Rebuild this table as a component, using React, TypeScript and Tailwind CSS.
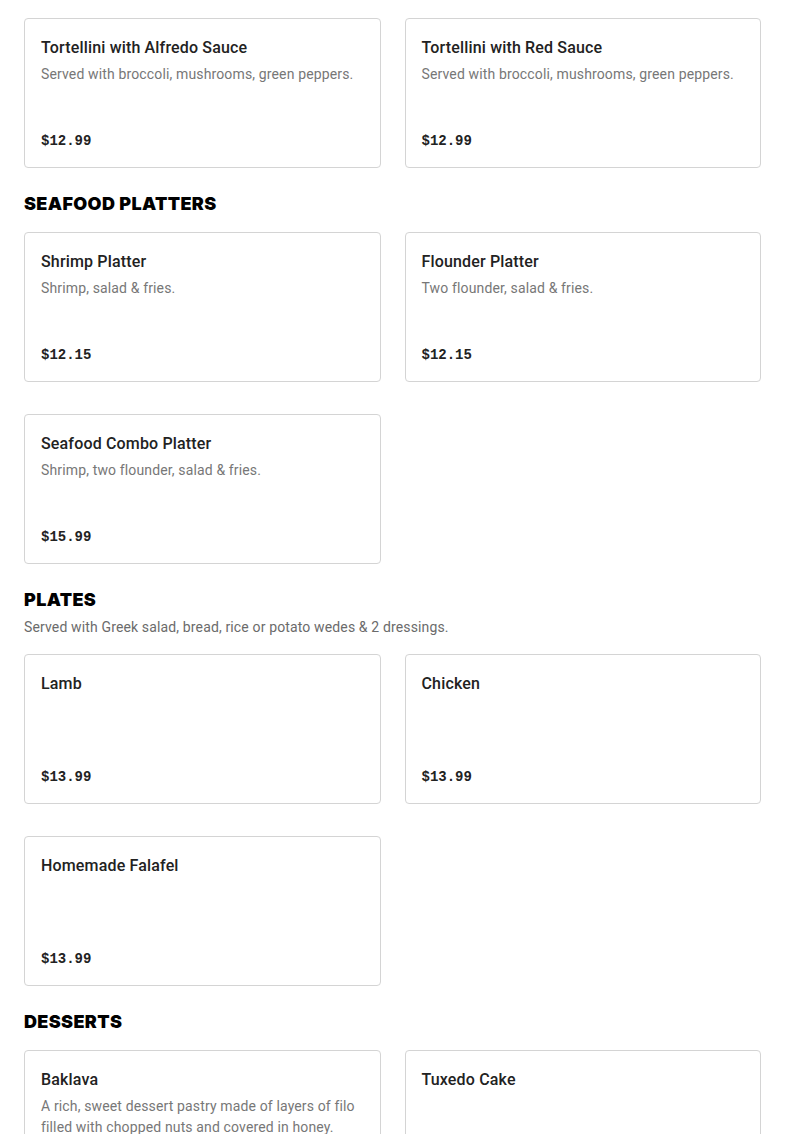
type Item = { name: string; desc?: string; price: string };

type Section = { title?: string; note?: string; items: Item[] };

const sections: Section[] = [
  {
    items: [
      { name: "Tortellini with Alfredo Sauce", desc: "Served with broccoli, mushrooms, green peppers.", price: "$12.99" },
      { name: "Tortellini with Red Sauce", desc: "Served with broccoli, mushrooms, green peppers.", price: "$12.99" },
    ],
  },
  {
    title: "Seafood Platters",
    items: [
      { name: "Shrimp Platter", desc: "Shrimp, salad & fries.", price: "$12.15" },
      { name: "Flounder Platter", desc: "Two flounder, salad & fries.", price: "$12.15" },
      { name: "Seafood Combo Platter", desc: "Shrimp, two flounder, salad & fries.", price: "$15.99" },
    ],
  },
  {
    title: "Plates",
    note: "Served with Greek salad, bread, rice or potato wedes & 2 dressings.",
    items: [
      { name: "Lamb", price: "$13.99" },
      { name: "Chicken", price: "$13.99" },
      { name: "Homemade Falafel", price: "$13.99" },
    ],
  },
  {
    title: "Desserts",
    items: [
      {
        name: "Baklava",
        desc: "A rich, sweet dessert pastry made of layers of filo filled with chopped nuts and covered in honey.",
        price: "$4.99",
      },
      { name: "Tuxedo Cake", price: "$4.99" },
    ],
  },
];

function MenuCard({ item }: { item: Item }) {
  return (
    <div className="flex h-[150px] flex-col justify-between rounded border border-[#d4d4d4] bg-white px-4 pt-[17px] pb-4">
      <div>
        <h3 className="text-[16px] leading-6 font-medium tracking-[0.01em] text-[#222]">{item.name}</h3>
        {item.desc && (
          <p className="mt-[4px] text-[14px] leading-[21px] tracking-[0.01em] text-[#777]">{item.desc}</p>
        )}
      </div>
      <div className="font-['Liberation_Mono',monospace] text-[14px] leading-5 font-bold text-[#222]">
        {item.price}
      </div>
    </div>
  );
}

export default function App() {
  return (
    <div className="min-h-screen bg-white px-6 pt-[18px] font-['Roboto',sans-serif]">
      {sections.map((s, i) => (
        <section key={i} className={i > 0 ? "mt-[24px]" : ""}>
          {s.title && (
            <div className="mb-[16px]">
              <h2 className="font-['Inter',sans-serif] text-[18px] leading-6 font-black tracking-[0.02em] text-black uppercase">
                {s.title}
              </h2>
              {s.note && (
                <p className="mt-[5px] pb-[1px] text-[14px] leading-5 tracking-[0.01em] text-[#6b6b6b]">{s.note}</p>
              )}
            </div>
          )}
          <div className="grid grid-cols-2 gap-x-6 gap-y-8">
            {s.items.map((it) => (
              <MenuCard key={it.name} item={it} />
            ))}
          </div>
        </section>
      ))}
    </div>
  );
}
